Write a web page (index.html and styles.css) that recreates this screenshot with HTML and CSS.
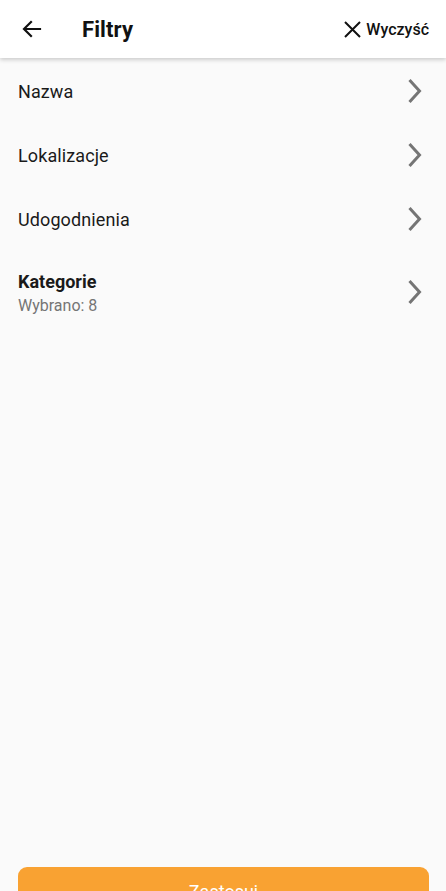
FILE: index.html
```html
<!DOCTYPE html>
<html lang="pl">
<head>
<meta charset="utf-8">
<link rel="stylesheet" href="styles.css">
</head>
<body>
<div class="screen">
  <header class="topbar">
    <div class="left">
      <svg class="back" width="24" height="24" viewBox="0 0 24 24"><path d="M20 12H5M11 5l-7 7 7 7" fill="none" stroke="#111" stroke-width="2.2" stroke-linecap="square"/></svg>
      <h1 class="title">Filtry</h1>
    </div>
    <div class="clear">
      <svg width="17" height="17" viewBox="0 0 17 17"><path d="M1 1L16 16M16 1L1 16" stroke="#111" stroke-width="2"/></svg>
      <span>Wyczyść</span>
    </div>
  </header>
  <main class="list">
    <div class="row"><div class="label">Nazwa</div><svg class="chev" width="18" height="26" viewBox="0 0 18 26"><path d="M3.5 2l10 11-10 11" fill="none" stroke="#757575" stroke-width="3"/></svg></div>
    <div class="row"><div class="label">Lokalizacje</div><svg class="chev" width="18" height="26" viewBox="0 0 18 26"><path d="M3.5 2l10 11-10 11" fill="none" stroke="#757575" stroke-width="3"/></svg></div>
    <div class="row"><div class="label">Udogodnienia</div><svg class="chev" width="18" height="26" viewBox="0 0 18 26"><path d="M3.5 2l10 11-10 11" fill="none" stroke="#757575" stroke-width="3"/></svg></div>
    <div class="row tall"><div class="texts"><div class="label bold">Kategorie</div><div class="sub">Wybrano: 8</div></div><svg class="chev" width="18" height="26" viewBox="0 0 18 26"><path d="M3.5 2l10 11-10 11" fill="none" stroke="#757575" stroke-width="3"/></svg></div>
  </main>
  <footer class="bottom">
    <button class="apply">Zastosuj</button>
  </footer>
</div>
</body>
</html>
```
FILE: styles.css
```css
* { box-sizing: border-box; }
html, body { margin: 0; padding: 0; }
body {
  background: #fafafa;
  font-family: Roboto, "Noto Sans", sans-serif;
  color: #1a1a1a;
  width: 446px;
  height: 891px;
  overflow: hidden;
}
.screen {
  display: flex;
  flex-direction: column;
  height: 891px;
}
.topbar {
  height: 58px;
  background: #fff;
  display: flex;
  align-items: center;
  justify-content: space-between;
  padding: 0 17px 0 20px;
  box-shadow: 0 2px 4px rgba(0,0,0,0.18);
  position: relative;
  z-index: 1;
}
.left { display: flex; align-items: center; }
.back { display: block; }
.title {
  margin: 0 0 0 38px;
  font-size: 22px;
  font-weight: 700;
  color: #111;
  letter-spacing: 0.1px;
}
.clear {
  display: flex;
  align-items: center;
  gap: 5px;
  font-size: 16px;
  font-weight: 500;
  color: #111;
}
.clear svg { display: block; }
.list {
  flex: 1;
  padding-top: 1px;
}
.row {
  height: 64px;
  display: flex;
  align-items: center;
  justify-content: space-between;
  padding: 0 22px 0 18px;
}
.row.tall { height: 82px; }
.texts {
  align-self: flex-start;
  padding-top: 19px;
}
.label {
  font-size: 18px;
  color: #1a1a1a;
  letter-spacing: 0.1px;
}
.label.bold { font-weight: 700; line-height: 24px; letter-spacing: 0; }
.sub {
  font-size: 16px;
  color: #757575;
  line-height: 24px;
}
.chev { display: block; }
.bottom {
  padding: 0 17px 0 18px;
  height: 24px;
}
.apply {
  width: 100%;
  height: 48px;
  border: none;
  border-radius: 9px;
  background: #f9a232;
  color: #fff;
  font-family: Roboto, sans-serif;
  font-size: 18px;
  display: block;
}
```
